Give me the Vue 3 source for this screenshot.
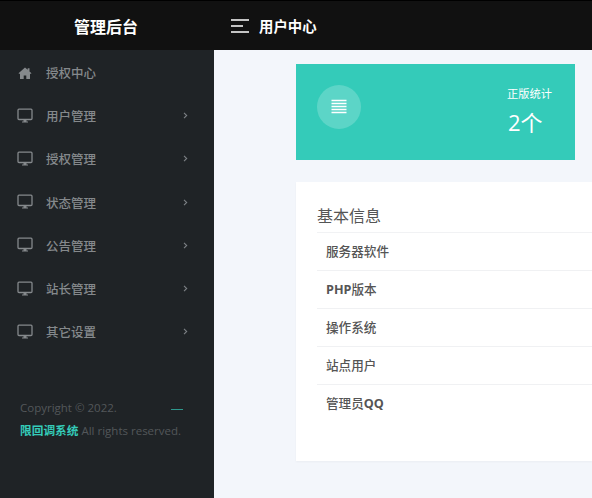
<template>
  <div class="page">
    <header class="topbar">
      <div class="brand">管理后台</div>
      <div class="top-title">
        <svg class="burger" width="18" height="14" viewBox="0 0 18 14">
          <path d="M0 1h18M0 7h12M0 13h18" stroke="#fff" stroke-width="1.6" fill="none" />
        </svg>
        <span>用户中心</span>
      </div>
    </header>
    <div class="body">
      <aside class="sidebar">
        <ul class="menu">
          <li v-for="item in menu" :key="item.name" class="menu-item">
            <svg v-if="item.home" class="icon" width="16" height="16" viewBox="0 0 16 16">
              <path d="M8 2.500 1.500 8.200l.8.8L3 8.400V14h3.700v-3.600h2.600V14H13V8.400l.7.6.8-.8L12.500 6.400V3.200h-1.800v1.600z" fill="#85898c" />
            </svg>
            <svg v-else class="icon" width="16" height="16" viewBox="0 0 16 16">
              <rect x="1" y="1.200" width="14" height="10.300" rx="1" fill="none" stroke="#85898c" stroke-width="1.300" />
              <path d="M6.500 12h3v1.400h1.500v1H5v-1h1.500z" fill="#85898c" />
            </svg>
            <span class="menu-name">{{ item.name }}</span>
            <svg v-if="!item.home" class="arrow" width="5" height="7" viewBox="0 0 5 7">
              <path d="M1 .8 3.700 3.500 1 6.200" fill="none" stroke="#7c8185" stroke-width="1.100" />
            </svg>
          </li>
        </ul>
        <div class="copyright">
          <div>Copyright © 2022.<span class="copy-mark"></span></div>
          <div class="copy-line"><span class="copy-name">限回调系统</span> All rights reserved.</div>
        </div>
      </aside>
      <main class="content">
        <section class="stat">
          <div class="stat-icon">
            <svg width="16" height="16" viewBox="0 0 16 16">
              <path d="M.5 1.500h15M.5 4.500h15M.5 7.500h15M.5 10.500h15M.5 13.500h15" stroke="#fff" stroke-width="1.500" fill="none" />
            </svg>
          </div>
          <div class="stat-text">
            <div class="stat-label">正版统计</div>
            <div class="stat-value">2个</div>
          </div>
        </section>
        <section class="info">
          <h3 class="info-title">基本信息</h3>
          <div v-for="row in rows" :key="row.text" class="info-row">
            <b v-if="row.before">{{ row.before }}</b>{{ row.text }}<b v-if="row.after">{{ row.after }}</b>
          </div>
        </section>
      </main>
    </div>
  </div>
</template>

<script setup>
const menu = [
  { name: "授权中心", home: true },
  { name: "用户管理" },
  { name: "授权管理" },
  { name: "状态管理" },
  { name: "公告管理" },
  { name: "站长管理" },
  { name: "其它设置" },
];

// the latin part of a label is bold in the original
const rows = [
  { text: "服务器软件" },
  { before: "PHP", text: "版本" },
  { text: "操作系统" },
  { text: "站点用户" },
  { text: "管理员", after: "QQ" },
];
</script>

<style>
html,
body {
  margin: 0;
  overflow: hidden;
}
</style>

<style scoped>
.page {
  width: 592px;
  height: 498px;
  display: flex;
  flex-direction: column;
  overflow: hidden;
  font-family: "Open Sans", "Noto Sans CJK SC", sans-serif;
  background-color: #f3f6fb;
}

.topbar {
  height: 50px;
  flex-shrink: 0;
  display: flex;
  align-items: center;
  background-color: #111;
  border-top: 1px solid #000;
  box-sizing: border-box;
  color: #fff;
}

.brand {
  width: 214px;
  text-align: center;
  font-size: 16px;
  font-weight: 700;
  padding-right: 2px;
  box-sizing: border-box;
}

.top-title {
  display: flex;
  align-items: center;
  gap: 10px;
  padding-left: 17px;
  font-size: 14.400px;
  font-weight: 700;
}

.body {
  flex: 1;
  display: flex;
  min-height: 0;
}

.sidebar {
  width: 214px;
  flex-shrink: 0;
  background-color: #1f2326;
}

.menu {
  list-style: none;
  margin: 0;
  padding: 1px 0 0;
}

.menu-item {
  height: 43.200px;
  display: flex;
  align-items: center;
  padding-left: 17px;
  color: #85898c;
  font-size: 12.500px;
  font-weight: 500;
}

.icon {
  width: 16px;
  flex-shrink: 0;
}

.menu-name {
  margin-left: 13px;
  width: 137px;
}

.copyright {
  margin-top: 44px;
  padding-left: 20px;
  font-size: 11.500px;
  line-height: 22px;
  color: #53575a;
}

.copy-mark {
  display: inline-block;
  width: 12px;
  height: 1px;
  margin-left: 54px;
  vertical-align: middle;
  background-color: #34cbb9;
  opacity: 0.7;
}

.copy-line {
  white-space: nowrap;
}

.copy-name {
  color: #34cbb9;
  font-size: 11.700px;
  font-weight: 700;
}

.content {
  flex: 1;
  padding: 14px 0 0 82px;
  min-width: 0;
}

.stat {
  width: 279px;
  height: 96px;
  box-sizing: border-box;
  display: flex;
  align-items: center;
  justify-content: space-between;
  padding: 0 23px 10px 21px;
  background-color: #34cbb9;
}

.stat-icon {
  width: 44px;
  height: 44px;
  border-radius: 50%;
  display: flex;
  align-items: center;
  justify-content: center;
  background-color: rgba(255, 255, 255, 0.2);
}

.stat-text {
  margin-top: 14px;
  color: #fff;
}

.stat-label {
  font-size: 11.250px;
  line-height: 16px;
}

.stat-value {
  padding-left: 1px;
  font-size: 22px;
  line-height: 40px;
}

.info {
  margin-top: 22px;
  height: 279px;
  box-sizing: border-box;
  padding: 22px 0 0 21px;
  background-color: #fff;
  box-shadow: 0 1px 2px rgba(0, 0, 0, 0.04);
}

.info-title {
  margin: 0;
  height: 28px;
  line-height: 24px;
  font-size: 16px;
  font-weight: 400;
  color: #555;
  border-bottom: 1px solid #f1f2f4;
}

.info-row {
  height: 38px;
  box-sizing: border-box;
  padding-left: 9px;
  line-height: 38px;
  font-size: 12.600px;
  font-weight: 500;
  color: #555;
  border-bottom: 1px solid #f0f1f3;
}

.info-row:last-child {
  border-bottom: none;
}
</style>
